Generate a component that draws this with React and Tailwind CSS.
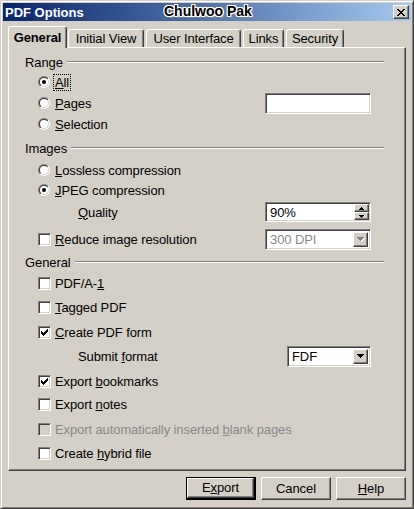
import React from "react";

const raised =
  "border border-t-white border-l-white border-r-[#404040] border-b-[#404040] shadow-[inset_-1px_-1px_0_#808080]";
const sunken =
  "border border-t-[#808080] border-l-[#808080] border-r-white border-b-white shadow-[inset_1px_1px_0_#404040,inset_-1px_-1px_0_#d4d0c8]";

function Radio({ checked }) {
  return (
    <svg width="12" height="12" viewBox="0 0 12 12" className="shrink-0">
      <defs>
        <linearGradient id="ro" x1="0" y1="0" x2="1" y2="1">
          <stop offset="0.5" stopColor="#808080" />
          <stop offset="0.5" stopColor="#ffffff" />
        </linearGradient>
        <linearGradient id="ri" x1="0" y1="0" x2="1" y2="1">
          <stop offset="0.5" stopColor="#404040" />
          <stop offset="0.5" stopColor="#d4d0c8" />
        </linearGradient>
      </defs>
      <circle cx="6" cy="6" r="6" fill="url(#ro)" />
      <circle cx="6" cy="6" r="5" fill="url(#ri)" />
      <circle cx="6" cy="6" r="4" fill="#ffffff" />
      {checked && <circle cx="6" cy="6" r="2" fill="#000" />}
    </svg>
  );
}

function Check() {
  const rows = [
    [6, 1],
    [5, 2],
    [0, 1, 4, 3],
    [0, 2, 3, 3],
    [0, 5],
    [1, 3],
    [2, 1],
  ];
  return (
    <svg width="9" height="9" viewBox="0 0 9 9" shapeRendering="crispEdges">
      {rows.map((r, y) => {
        const out = [];
        for (let i = 0; i < r.length; i += 2)
          out.push(<rect key={y + "-" + i} x={r[i] + 1} y={y + 1} width={r[i + 1]} height="1" fill="#000" />);
        return out;
      })}
    </svg>
  );
}

function Checkbox({ checked, disabled }) {
  return (
    <div
      className={`w-[13px] h-[13px] shrink-0 flex items-center justify-center ${sunken} ${
        disabled ? "bg-[#d4d0c8]" : "bg-white"
      }`}
    >
      {checked && <Check />}
    </div>
  );
}

function DownArrow({ disabled }) {
  const c = disabled ? "#808080" : "#000";
  return (
    <svg width="8" height="5" viewBox="0 0 8 5" shapeRendering="crispEdges">
      {disabled && (
        <g fill="#fff">
          <rect x="1" y="1" width="7" height="1" />
          <rect x="2" y="2" width="5" height="1" />
          <rect x="3" y="3" width="3" height="1" />
          <rect x="4" y="4" width="1" height="1" />
        </g>
      )}
      <g fill={c}>
        <rect x="0" y="0" width="7" height="1" />
        <rect x="1" y="1" width="5" height="1" />
        <rect x="2" y="2" width="3" height="1" />
        <rect x="3" y="3" width="1" height="1" />
      </g>
    </svg>
  );
}

function SmallArrow({ up }) {
  return (
    <svg width="5" height="3" viewBox="0 0 5 3" shapeRendering="crispEdges">
      {up ? (
        <g fill="#000">
          <rect x="2" y="0" width="1" height="1" />
          <rect x="1" y="1" width="3" height="1" />
          <rect x="0" y="2" width="5" height="1" />
        </g>
      ) : (
        <g fill="#000">
          <rect x="0" y="0" width="5" height="1" />
          <rect x="1" y="1" width="3" height="1" />
          <rect x="2" y="2" width="1" height="1" />
        </g>
      )}
    </svg>
  );
}

function Section({ label, mt }) {
  return (
    <div className={`flex h-[20px] items-center w-[375px] pl-[16px] ${mt}`}>
      <span>{label}</span>
      <div className="ml-[4px] flex-1 h-[2px] border-t border-t-[#808080] border-b border-b-white" />
    </div>
  );
}

function Row({ mt, pl = "pl-[29px]", children }) {
  return <div className={`flex h-[20px] items-center ${pl} ${mt}`}>{children}</div>;
}

function Select({ value, disabled, w }) {
  return (
    <div className={`ml-auto mr-[34px] h-[21px] ${w} ${sunken} bg-white flex items-center p-[2px]`}>
      <span className={`flex-1 pl-[2px] leading-[15px] ${disabled ? "text-[#8a8a8a]" : "text-black"}`}>{value}</span>
      <div className={`w-[15px] h-[15px] bg-[#d4d0c8] ${raised} flex items-center justify-center`}>
        <DownArrow disabled={disabled} />
      </div>
    </div>
  );
}

function Button({ children, def }) {
  const inner = (
    <div className={`w-full h-full ${raised} flex items-center justify-center`}>{children}</div>
  );
  return (
    <div className={`w-[70px] h-[23px] ${def ? "border border-black border-r-2 border-b-2" : ""}`}>{inner}</div>
  );
}

function Tab({ label, w, selected }) {
  return (
    <div
      className={`${w} ${
        selected ? "h-[22px] -mb-[1px] relative z-10 font-bold" : "h-[18px]"
      } bg-[#d4d0c8] border-l border-t border-l-white border-t-white border-r border-r-[#404040] shadow-[inset_-1px_0_0_#808080] rounded-t-[3px] flex items-center justify-center leading-[15px]`}
    >
      {label}
    </div>
  );
}

function CloseGlyph() {
  const rows = [
    [0, 2, 6, 2],
    [1, 2, 5, 2],
    [2, 4],
    [3, 2],
    [2, 4],
    [1, 2, 5, 2],
    [0, 2, 6, 2],
  ];
  return (
    <svg width="8" height="7" viewBox="0 0 8 7" shapeRendering="crispEdges">
      {rows.map((r, y) => {
        const out = [];
        for (let i = 0; i < r.length; i += 2)
          out.push(<rect key={y + "-" + i} x={r[i]} y={y} width={r[i + 1]} height="1" fill="#000" />);
        return out;
      })}
    </svg>
  );
}

export default function App() {
  return (
    <div className="w-[414px] h-[509px] bg-[#d4d0c8] font-['Liberation_Sans',Arial,sans-serif] text-[13px] tracking-[-0.1px] text-black">
      <div className="w-full h-full border border-t-[#d4d0c8] border-l-[#d4d0c8] border-r-[#404040] border-b-[#404040] shadow-[inset_1px_1px_0_#ffffff,inset_-1px_-1px_0_#808080] p-[2px] flex flex-col">
        {/* Title bar */}
        <div className="relative h-[18px] shrink-0 bg-gradient-to-r from-[#0a246a] to-[#a6caf0] flex items-center">
          <span className="pl-[2px] text-white font-bold leading-[15px] tracking-normal">PDF Options</span>
          <span className="absolute left-[161px] top-[1px] font-bold text-[14px] leading-[15px] tracking-normal text-black [text-shadow:1px_0_0_#fff,-1px_0_0_#fff,0_1px_0_#fff,0_-1px_0_#fff,1px_1px_0_#fff,-1px_-1px_0_#fff,1px_-1px_0_#fff,-1px_1px_0_#fff,2px_2px_0_#888]">
            Chulwoo Pak
          </span>
          <div className={`ml-auto mr-[2px] w-[16px] h-[14px] bg-[#d4d0c8] ${raised} flex items-center justify-center`}>
            <CloseGlyph />
          </div>
        </div>

        {/* Tabs */}
        <div className="mt-[5px] ml-[5px] h-[21px] flex items-end shrink-0">
          <Tab label="General" w="w-[59px]" selected />
          <div className="w-[1px]" />
          <Tab label="Initial View" w="w-[76px]" />
          <div className="w-[2px]" />
          <Tab label="User Interface" w="w-[95px]" />
          <div className="w-[2px]" />
          <Tab label="Links" w="w-[41px]" />
          <div className="w-[2px]" />
          <Tab label="Security" w="w-[58px]" />
        </div>

        {/* Panel */}
        <div className="ml-[5px] w-[398px] h-[424px] shrink-0 border border-t-white border-l-white border-r-[#404040] border-b-[#404040] shadow-[inset_-1px_-1px_0_#808080] leading-[15px]">
          <Section label="Range" mt="mt-[4px]" />
          <Row mt="">
            <Radio checked />
            <span className="ml-[4px] px-[1px] outline outline-1 outline-dotted outline-black">
              <u>A</u>ll
            </span>
          </Row>
          <Row mt="mt-[1px]">
            <Radio />
            <span className="ml-[5px]">
              <u>P</u>ages
            </span>
            <div className={`ml-auto mr-[34px] w-[106px] h-[21px] bg-white ${sunken}`} />
          </Row>
          <Row mt="mt-[1px]">
            <Radio />
            <span className="ml-[5px]">
              <u>S</u>election
            </span>
          </Row>

          <Section label="Images" mt="mt-[4px]" />
          <Row mt="mt-[2px]">
            <Radio />
            <span className="ml-[5px]">
              <u>L</u>ossless compression
            </span>
          </Row>
          <Row mt="">
            <Radio checked />
            <span className="ml-[5px]">
              <u>J</u>PEG compression
            </span>
          </Row>
          <Row mt="mt-[2px]" pl="pl-[69px]">
            <span>
              <u>Q</u>uality
            </span>
            <div className={`ml-auto mr-[34px] w-[106px] h-[20px] bg-white ${sunken} flex items-center p-[1px]`}>
              <span className="flex-1 pl-[3px]">90%</span>
              <div className="flex flex-col w-[15px] h-[16px]">
                <div className={`h-[8px] bg-[#d4d0c8] ${raised} flex items-center justify-center`}>
                  <SmallArrow up />
                </div>
                <div className={`h-[8px] bg-[#d4d0c8] ${raised} flex items-center justify-center`}>
                  <SmallArrow />
                </div>
              </div>
            </div>
          </Row>
          <Row mt="mt-[7px]">
            <Checkbox />
            <span className="ml-[4px]">
              <u>R</u>educe image resolution
            </span>
            <Select value="300 DPI" disabled w="w-[106px]" />
          </Row>

          <Section label="General" mt="mt-[3px]" />
          <Row mt="mt-[1px]">
            <Checkbox />
            <span className="ml-[4px]">
              PDF/A-<u>1</u>
            </span>
          </Row>
          <Row mt="mt-[4px]">
            <Checkbox />
            <span className="ml-[4px]">
              <u>T</u>agged PDF
            </span>
          </Row>
          <Row mt="mt-[5px]">
            <Checkbox checked />
            <span className="ml-[4px]">
              <u>C</u>reate PDF form
            </span>
          </Row>
          <Row mt="mt-[4px]" pl="pl-[69px]">
            <span>
              Submit <u>f</u>ormat
            </span>
            <Select value="FDF" w="w-[84px]" />
          </Row>
          <Row mt="mt-[5px]">
            <Checkbox checked />
            <span className="ml-[4px]">
              Export <u>b</u>ookmarks
            </span>
          </Row>
          <Row mt="mt-[3px]">
            <Checkbox />
            <span className="ml-[4px]">
              Export <u>n</u>otes
            </span>
          </Row>
          <Row mt="mt-[5px]">
            <Checkbox disabled />
            <span className="ml-[4px] text-[#8a8a8a]">
              Export automatically inserted <u>b</u>lank pages
            </span>
          </Row>
          <Row mt="mt-[4px]">
            <Checkbox />
            <span className="ml-[4px]">
              Create <u>h</u>ybrid file
            </span>
          </Row>
        </div>

        {/* Buttons */}
        <div className="mt-[6px] ml-[183px] flex gap-[5px] shrink-0">
          <Button def>
            <span>
              E<u>x</u>port
            </span>
          </Button>
          <Button>Cancel</Button>
          <Button>
            <span>
              <u>H</u>elp
            </span>
          </Button>
        </div>
      </div>
    </div>
  );
}
